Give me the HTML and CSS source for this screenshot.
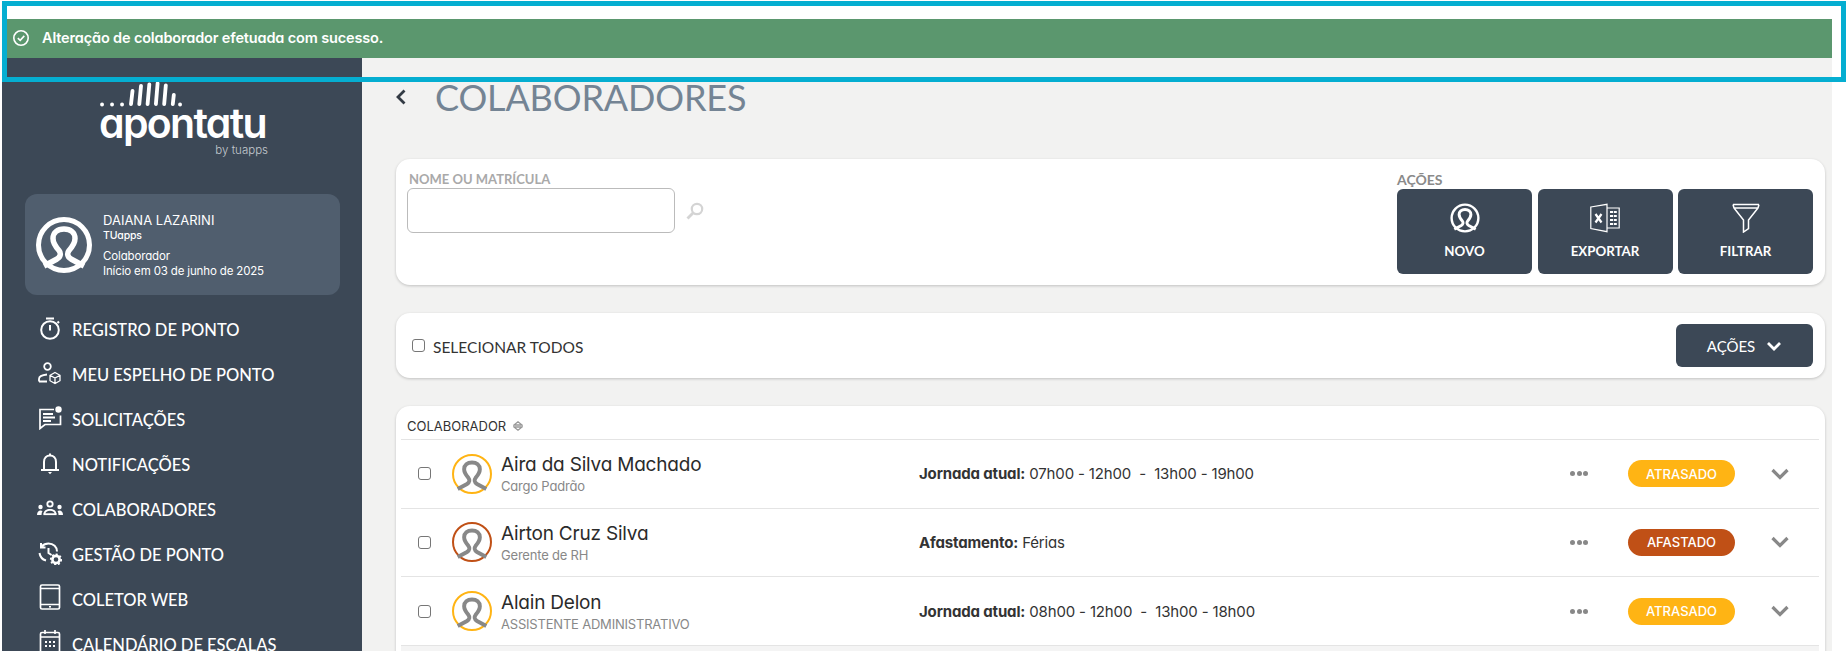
FILE: index.html
```html
<!DOCTYPE html>
<html lang="pt-BR">
<head>
<meta charset="utf-8">
<title>Colaboradores</title>
<link rel="stylesheet" href="styles.css">
</head>
<body>
<svg class="defs" width="0" height="0" aria-hidden="true">
  <symbol id="person" viewBox="0 0 56 56">
    <path d="M8 49 L21 42 C25 39.500 25 36 23 33.500 C19 29 17 25.500 17 21.500 C17 15.500 21.500 12 28 12 C34.500 12 39 15.500 39 21.500 C39 25.500 37 29 33 33.500 C31 36 31 39.500 35 42 L48 49" fill="none" stroke="currentColor" stroke-width="5.500"/>
  </symbol>
</svg>
<div class="frame"></div>
<div class="page">
  <div class="alert">
    <svg class="alert-icon" viewBox="0 0 16 16"><circle cx="8" cy="8" r="7.200" fill="none" stroke="currentColor" stroke-width="1.600"/><path d="M4.800 8.200 7.200 10.400 11.300 5.900" fill="none" stroke="currentColor" stroke-width="1.600"/></svg>
    <span>Alteração de colaborador efetuada com sucesso.</span>
  </div>
  <div class="shell">
    <aside class="sidebar">
      <div class="logo">
        <svg class="logo-bars" viewBox="0 0 170 26">
          <g stroke="#fff" stroke-width="3.800" stroke-linecap="round" fill="none">
            <path d="M5 22.500h.1M15 22.500h.1M25 22.500h.1"/>
            <path d="M34 22 35.500 9M42.300 22 44 4M50.600 22 52.300 2.500M58.900 22 60.600 1.500M67.200 22 68.800 3.500M75.800 22 76.800 13M83 22.500h.1"/>
          </g>
        </svg>
        <div class="logo-word">apontatu</div>
        <div class="logo-by">by tuapps</div>
      </div>
      <div class="profile">
        <svg class="profile-avatar" viewBox="0 0 56 56"><circle cx="28" cy="28" r="25.500" fill="none" stroke="#fff" stroke-width="5"/><use href="#person"/></svg>
        <div class="profile-text">
          <div class="profile-name">DAIANA LAZARINI</div>
          <div class="profile-org">TUapps</div>
          <div class="profile-role">Colaborador</div>
          <div class="profile-role">Início em 03 de junho de 2025</div>
        </div>
      </div>
      <nav class="menu">
        <a class="menu-item"><svg class="menu-icon" viewBox="0 0 24 24"><g fill="none" stroke="#fff" stroke-width="2"><circle cx="12" cy="14" r="8.800"/><path d="M8 2.500h8M12 9v5.500M19.500 5.500l1.500 1.500"/></g></svg><span>REGISTRO DE PONTO</span></a>
        <a class="menu-item"><svg class="menu-icon" viewBox="0 0 24 24"><g fill="none" stroke="#fff" stroke-width="1.800"><circle cx="9.500" cy="5.500" r="3.300"/><path d="M1 20.500v-2.500c0-2.500 3-4 8-4.500M1 20.500h8"/><path d="M17 11.500l5 2.800v5.400l-5 2.800-5-2.800v-5.400zM12 14.300l5 2.800 5-2.800M17 17.100v5.400" stroke-width="1.300"/></g></svg><span>MEU ESPELHO DE PONTO</span></a>
        <a class="menu-item"><svg class="menu-icon" viewBox="0 0 24 24"><g fill="none" stroke="#fff" stroke-width="1.700"><path d="M16 3.500H2v19l5-4h15.500v-9"/><path d="M5 8h10M5 11.500h12M5 15h8" stroke-width="2"/></g><circle cx="20.500" cy="3.500" r="3.200" fill="#fff"/></svg><span>SOLICITAÇÕES</span></a>
        <a class="menu-item"><svg class="menu-icon" viewBox="0 0 24 24"><g fill="none" stroke="#fff" stroke-width="2"><path d="M6 18.500V11c0-4 2.500-6.500 6-6.500s6 2.500 6 6.500v7.500M3 19h18"/></g><path d="M10 21h4l-2 2.200zM11 2.500h2v2.500h-2z" fill="#fff"/></svg><span>NOTIFICAÇÕES</span></a>
        <a class="menu-item"><svg class="menu-icon menu-icon-wide" viewBox="0 0 28 24"><g fill="#fff"><circle cx="14" cy="8" r="2.700" fill="none" stroke="#fff" stroke-width="1.800"/><path d="M7.500 18.500c0-4 3-5.500 6.500-5.500s6.500 1.500 6.500 5.500h-1.800c0-2.700-1.800-3.800-4.700-3.800s-4.700 1.100-4.700 3.800z"/><rect x="7.500" y="17.300" width="13" height="1.800"/><circle cx="4.500" cy="11" r="2.200"/><circle cx="23.500" cy="11" r="2.200"/><path d="M1 19c0-3 1.500-4.500 3.500-4.500.8 0 1.500.2 2 .6-.6 1-1 2.400-1 3.900zM27 19c0-3-1.500-4.500-3.500-4.500-.8 0-1.500.2-2 .6.600 1 1 2.400 1 3.900z"/></g></svg><span>COLABORADORES</span></a>
        <a class="menu-item"><svg class="menu-icon" viewBox="0 0 24 24"><g fill="none" stroke="#fff" stroke-width="2"><path d="M3.500 5.500c2-2 4.500-3 7-3 5 0 8.500 3.500 8.500 8M1.500 12c.5 3.500 3 6.500 6.500 7.500M3 2v4.500h4.500M10.500 7v5l3 2"/></g><circle cx="18" cy="18.500" r="3.600" fill="none" stroke="#fff" stroke-width="2.600"/><circle cx="18" cy="18.500" r="5.200" fill="none" stroke="#fff" stroke-width="1.800" stroke-dasharray="2 1.930"/></svg><span>GESTÃO DE PONTO</span></a>
        <a class="menu-item"><svg class="menu-icon menu-icon-tall" viewBox="0 0 22 26"><g fill="none" stroke="#fff" stroke-width="1.700"><rect x="1.500" y="1" width="19" height="24" rx="1.500"/><path d="M1.500 4.500h19M1.500 20.500h19"/></g><rect x="10" y="22" width="2" height="1.600" fill="#fff"/></svg><span>COLETOR WEB</span></a>
        <a class="menu-item"><svg class="menu-icon menu-icon-tall" viewBox="0 0 22 26"><g fill="none" stroke="#fff" stroke-width="1.700"><rect x="1.500" y="3.500" width="19" height="21" rx="1.500"/><path d="M1.500 8h19M6 1v4M16 1v4"/></g><g fill="#fff"><rect x="6" y="12" width="2" height="2"/><rect x="10" y="12" width="2" height="2"/><rect x="14" y="12" width="2" height="2"/><rect x="6" y="16" width="2" height="2"/><rect x="10" y="16" width="2" height="2"/><rect x="14" y="16" width="2" height="2"/></g></svg><span>CALENDÁRIO DE ESCALAS</span></a>
      </nav>
    </aside>
    <main class="content">
      <header class="title-row">
        <svg class="back" viewBox="0 0 10 16"><path d="M8.500 1.500 2 8 8.500 14.500" fill="none" stroke="#333b44" stroke-width="2.800"/></svg>
        <h1 class="title">COLABORADORES</h1>
      </header>
      <section class="card card-search">
        <div class="search">
          <label class="field-label">NOME OU MATRÍCULA</label>
          <div class="search-line">
            <div class="input"></div>
            <svg class="search-icon" viewBox="0 0 18 18"><circle cx="11" cy="7" r="5.200" fill="none" stroke="#d4d4d4" stroke-width="2.200"/><path d="M7 11 1.500 16.500" stroke="#d4d4d4" stroke-width="2.800" fill="none"/></svg>
          </div>
        </div>
        <div class="actions">
          <div class="actions-label">AÇÕES</div>
          <div class="actions-buttons">
            <button class="tile">
              <svg class="tile-icon" viewBox="0 0 56 56"><circle cx="28" cy="28" r="25" fill="none" stroke="#fff" stroke-width="4.500"/><use href="#person"/></svg>
              <span>NOVO</span>
            </button>
            <button class="tile">
              <svg class="tile-icon" viewBox="0 0 30 29"><g fill="none" stroke="#fff" stroke-width="1.200"><path d="M0.800 3.500 17 0.800V28.200L0.800 25z"/><path d="M17 4.500h12.200v20H17"/><path d="M20 8.500h7M20 12.500h7M20 16.500h7M20 20.500h7" stroke-width="2.200" stroke-dasharray="3 .8"/></g><path d="M5.500 10.500l6 8.500M11.500 10.500l-6 8.500" stroke="#fff" stroke-width="2.200" fill="none"/></svg>
              <span>EXPORTAR</span>
            </button>
            <button class="tile">
              <svg class="tile-icon" viewBox="0 0 30 30"><g fill="none" stroke="#fff" stroke-width="1.500"><path d="M2 1.500h26M2.500 5h25M3 5l9.500 12v12l5-3.500V17L27 5M2 1.500l1 3.500M28 1.500l-1 3.500"/></g></svg>
              <span>FILTRAR</span>
            </button>
          </div>
        </div>
      </section>
      <section class="card card-select">
        <label class="select-all"><input type="checkbox" class="check"><span>SELECIONAR TODOS</span></label>
        <button class="menu-button">AÇÕES<svg class="menu-button-chevron" viewBox="0 0 16 10"><path d="M2 2l6 6 6-6" fill="none" stroke="#fff" stroke-width="2.800"/></svg></button>
      </section>
      <section class="card card-list">
        <div class="list-head">COLABORADOR<svg class="sort" viewBox="0 0 10 10"><path d="M1 4 5 .8 9 4zM1 6 5 9.200 9 6z" fill="#fff" stroke="#999" stroke-width="1.300"/></svg></div>
        <div class="row">
          <input type="checkbox" class="check">
          <svg class="avatar late" viewBox="0 0 40 40"><circle cx="20" cy="20" r="19" fill="none" stroke="currentColor" stroke-width="2"/><use href="#person" x="0" y="0" width="40" height="40" class="avatar-person"/></svg>
          <div class="who"><div class="who-name">Aira da Silva Machado</div><div class="who-role">Cargo Padrão</div></div>
          <div class="info"><b>Jornada atual:</b> 07h00 - 12h00 &nbsp;- &nbsp;13h00 - 19h00</div>
          <div class="dots"><i></i><i></i><i></i></div>
          <div class="badge badge-late">ATRASADO</div>
          <svg class="chevron" viewBox="0 0 18 12"><path d="M1.500 2 9 9.500 16.500 2" fill="none" stroke="#888" stroke-width="3.200"/></svg>
        </div>
        <div class="row">
          <input type="checkbox" class="check">
          <svg class="avatar away" viewBox="0 0 40 40"><circle cx="20" cy="20" r="19" fill="none" stroke="currentColor" stroke-width="2"/><use href="#person" x="0" y="0" width="40" height="40" class="avatar-person"/></svg>
          <div class="who"><div class="who-name">Airton Cruz Silva</div><div class="who-role">Gerente de RH</div></div>
          <div class="info"><b>Afastamento:</b> Férias</div>
          <div class="dots"><i></i><i></i><i></i></div>
          <div class="badge badge-away">AFASTADO</div>
          <svg class="chevron" viewBox="0 0 18 12"><path d="M1.500 2 9 9.500 16.500 2" fill="none" stroke="#888" stroke-width="3.200"/></svg>
        </div>
        <div class="row">
          <input type="checkbox" class="check">
          <svg class="avatar late" viewBox="0 0 40 40"><circle cx="20" cy="20" r="19" fill="none" stroke="currentColor" stroke-width="2"/><use href="#person" x="0" y="0" width="40" height="40" class="avatar-person"/></svg>
          <div class="who"><div class="who-name">Alain Delon</div><div class="who-role">ASSISTENTE ADMINISTRATIVO</div></div>
          <div class="info"><b>Jornada atual:</b> 08h00 - 12h00 &nbsp;- &nbsp;13h00 - 18h00</div>
          <div class="dots"><i></i><i></i><i></i></div>
          <div class="badge badge-late">ATRASADO</div>
          <svg class="chevron" viewBox="0 0 18 12"><path d="M1.500 2 9 9.500 16.500 2" fill="none" stroke="#888" stroke-width="3.200"/></svg>
        </div>
        <div class="row-next"></div>
      </section>
    </main>
  </div>
</div>
</body>
</html>
```

FILE: styles.css
```css
* { box-sizing: border-box; }
html, body { margin: 0; height: 651px; overflow: hidden; background: #fff; }
body { position: relative; font-family: "Inter", "Liberation Sans", sans-serif; font-feature-settings: "cv11"; color: #333; }
.defs { position: absolute; }
.frame { position: absolute; left: 2px; top: 1px; width: 1844px; height: 81px; border: 5px solid #05aed1; z-index: 5; }
.page { padding: 19px 14px 0 2px; height: 651px; display: flex; flex-direction: column; }
.alert { height: 39px; flex: none; background: #5b976e; color: #fff; display: flex; align-items: center; padding: 0 0 2px 11px; font-size: 14.5px; font-weight: 600; letter-spacing: -.15px; }
.alert-icon { width: 16px; height: 16px; margin-right: 13px; }
.shell { flex: 1; display: flex; min-height: 0; }
.sidebar { width: 360px; flex: none; background: #3c4856; color: #fff; font-family: "Lato", sans-serif; font-feature-settings: normal; }
.logo { height: 136px; padding: 24px 0 0 95px; }
.logo-bars { display: block; width: 170px; height: 26px; }
.logo-word { font-family: "Inter", sans-serif; font-feature-settings: "cv11"; font-size: 41px; font-weight: 600; letter-spacing: -1.700px; line-height: 40px; margin: -5px 0 0 2px; width: 171px; }
.logo-by { font-family: "Inter", sans-serif; font-size: 11.500px; font-weight: 300; color: #c3c9cf; width: 171px; text-align: right; line-height: 14px; }
.profile { margin-left: 23px; width: 315px; height: 101px; background: #505e6e; border-radius: 12px; display: flex; align-items: center; padding-left: 11px; }
.profile-avatar { width: 56px; height: 56px; color: #fff; flex: none; }
.profile-text { margin-left: 11px; margin-top: 1px; font-family: "Inter", sans-serif; font-feature-settings: "cv11"; letter-spacing: -.15px; }
.profile-name { font-size: 13px; line-height: 17px; font-weight: 400; letter-spacing: 0; }
.profile-org { font-size: 10.500px; line-height: 14px; font-weight: 500; margin-bottom: 6px; }
.profile-role { font-size: 11.500px; line-height: 15px; }
.menu { margin-top: 12px; }
.menu-item { height: 45px; display: flex; align-items: center; font-size: 16.500px; font-weight: 500; position: relative; padding-left: 70px; }
.menu-icon { position: absolute; left: 36px; top: 9px; width: 24px; height: 24px; }
.menu-icon-wide { left: 34px; width: 28px; }
.menu-icon-tall { left: 37px; top: 7px; width: 22px; height: 26px; }
.content { flex: 1; min-width: 0; background: #f2f2f1; padding: 0 7px 0 34px; overflow: hidden; }
.title-row { height: 78px; margin-bottom: 23px; display: flex; align-items: center; }
.back { width: 10px; height: 16px; margin-right: 29px; flex: none; }
.title { margin: 0; font-family: "Lato", sans-serif; font-size: 36px; font-weight: 400; color: #748494; letter-spacing: -.15px; line-height: 40px; }
.card { background: #fff; border-radius: 14px; box-shadow: 0 1px 3px rgba(0,0,0,.2); margin-bottom: 28px; }
.card-search { height: 126px; display: flex; justify-content: space-between; padding: 11px 12px 0 11px; }
.field-label { display: block; margin-left: 2px; font-family: "Lato", sans-serif; font-size: 13px; font-weight: 700; color: #a9a9a9; line-height: 18px; }
.search-line { display: flex; align-items: center; }
.input { width: 268px; height: 45px; border: 1px solid #bbb; border-radius: 6px; }
.search-icon { width: 18px; height: 18px; margin-left: 11px; }
.actions { width: 416px; }
.actions-label { font-family: "Lato", sans-serif; font-size: 14px; font-weight: 700; color: #8a8a8a; line-height: 19px; }
.actions-buttons { display: flex; gap: 5.500px; }
.tile { width: 135px; height: 85px; border: 0; border-radius: 6px; background: #3c4856; color: #fff; font-family: "Lato", sans-serif; font-size: 13.300px; font-weight: 700; padding: 14px 0 0; display: flex; flex-direction: column; align-items: center; }
.tile-icon { width: 30px; height: 30px; margin-bottom: 10px; flex: none; }
.card-select { height: 65px; display: flex; align-items: center; justify-content: space-between; padding: 0 12px 0 16px; }
.select-all { display: flex; align-items: center; font-family: "Lato", sans-serif; font-size: 15.500px; color: #333; }
.select-all span { margin-left: 8px; margin-top: 2px; }
.check { appearance: none; width: 13px; height: 13px; margin: 0; border: 1px solid #767676; border-radius: 3px; background: #fff; flex: none; }
.menu-button { width: 137px; height: 43px; border: 0; border-radius: 6px; background: #3c4856; color: #fff; font-family: "Lato", sans-serif; font-size: 15px; font-weight: 400; display: flex; align-items: center; justify-content: center; gap: 11px; }
.menu-button-chevron { width: 16px; height: 10px; }
.card-list { height: 300px; padding: 0 6px 0 5px; }
.list-head { height: 34px; display: flex; align-items: center; padding: 6px 0 0 6px; border-bottom: 1px solid #e4e4e4; font-size: 13px; color: #333; }
.sort { width: 10px; height: 10px; margin-left: 7px; }
.row { height: 68.670px; border-bottom: 1px solid #e4e4e4; display: grid; grid-template-columns: 51px 49px 418px 651px 58px 143px 18px; align-items: center; }
.row .check { margin-left: 17px; }
.avatar { width: 40px; height: 40px; overflow: hidden; }
.avatar-person { color: #888; }
.late { color: #ffb414; }
.away { color: #c05016; }
.avatar.late .avatar-person, .avatar.away .avatar-person { color: #888; }
.who { padding-top: 3px; }
.who-name { font-size: 19px; line-height: 22px; letter-spacing: -.2px; font-weight: 400; color: #2b2b2b; }
.who-role { font-size: 13px; line-height: 20px; letter-spacing: -.2px; color: #888; }
.info { font-size: 15px; letter-spacing: -.15px; color: #333; }
.info b { font-weight: 700; }
.dots { display: flex; gap: 1.500px; }
.dots i { width: 5px; height: 5px; border-radius: 50%; background: #888; }
.badge { width: 107px; height: 27px; border-radius: 14px; color: #fff; font-size: 13px; font-weight: 500; display: flex; align-items: center; justify-content: center; }
.badge-late { background: #ffb414; }
.badge-away { background: #c05016; }
.chevron { width: 18px; height: 12px; }
.row-next { height: 60px; background: #f4f4f4; }
```
